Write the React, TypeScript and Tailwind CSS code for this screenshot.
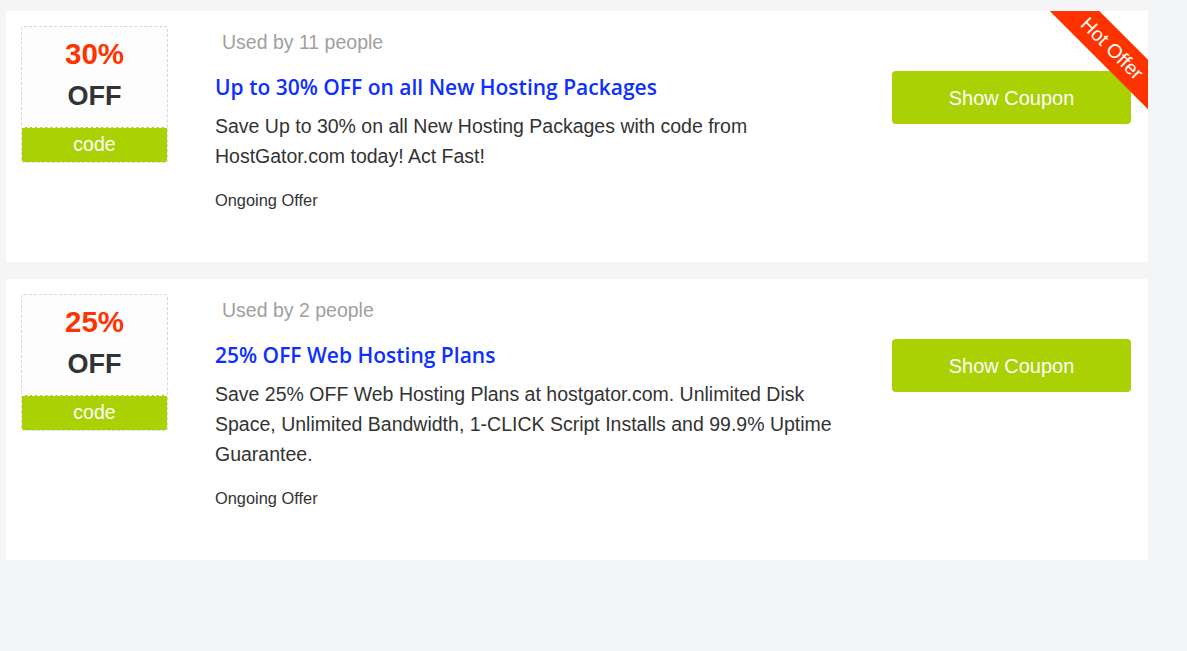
import React from 'react'

type Offer = {
  id: number
  percent: string
  used: string
  title: string
  description: string
  hot: boolean
}

const offers: Offer[] = [
  {
    id: 1,
    percent: '30%',
    used: 'Used by 11 people',
    title: 'Up to 30% OFF on all New Hosting Packages',
    description: 'Save Up to 30% on all New Hosting Packages with code from HostGator.com today! Act Fast!',
    hot: true,
  },
  {
    id: 2,
    percent: '25%',
    used: 'Used by 2 people',
    title: '25% OFF Web Hosting Plans',
    description:
      'Save 25% OFF Web Hosting Plans at hostgator.com. Unlimited Disk Space, Unlimited Bandwidth, 1-CLICK Script Installs and 99.9% Uptime Guarantee.',
    hot: false,
  },
]

const CouponCard: React.FC<{ offer: Offer }> = ({ offer }) => {
  return (
    <div className="relative overflow-hidden bg-white flex p-[15px]">
      {offer.hot && (
        <div className="absolute top-[20px] right-[-39px] w-[150px] h-[35px] rotate-45 bg-[#ff3300] text-white text-[19.5px] leading-[35px] text-center">
          Hot Offer
        </div>
      )}

      <div className="w-[147px] h-[137px] shrink-0 border border-dashed border-[#d8d8d8] rounded-[3px] bg-[#fdfdfe] flex flex-col overflow-hidden">
        <div className="flex-1 flex flex-col items-center">
          <span className="mt-[8px] text-[29.5px] leading-[38px] font-bold text-[#ff3300]">{offer.percent}</span>
          <span className="mt-[6px] text-[27px] leading-[34px] font-bold text-[#333333]">OFF</span>
        </div>
        <div className="h-[35px] bg-[#a9d104] border-t border-dashed border-white text-white text-[19.5px] leading-[33px] text-center">
          code
        </div>
      </div>

      <div className="ml-[47px] w-[630px] pb-[37px]">
        <div className="mt-[1px] pl-[7px] text-[19.5px] leading-[30px] text-[#a0a0a0]">{offer.used}</div>
        <div className="mt-[15px] text-[21px] leading-[30px] font-semibold text-[#0d2fff] font-['Open_Sans',sans-serif]">
          {offer.title}
        </div>
        <p className="mt-[9px] text-[19.5px] leading-[30px] text-[#333333]">{offer.description}</p>
        <div className="mt-[19px] text-[16.4px] leading-[20px] text-[#333333]">Ongoing Offer</div>
      </div>

      <div className="ml-auto mr-[2px] mt-[45px]">
        <button className="w-[239px] h-[53px] rounded-[4px] bg-[#a9d104] text-white text-[20px]">Show Coupon</button>
      </div>
    </div>
  )
}

const App: React.FC = () => {
  return (
    <div className="min-h-[651px] bg-[#f4f5f7] font-['Liberation_Sans',Arial,sans-serif]">
      <div className="w-[1142px] ml-[6px] pt-[11px] flex flex-col gap-[17px]">
        {offers.map((offer) => (
          <CouponCard key={offer.id} offer={offer} />
        ))}
      </div>
    </div>
  )
}

export default App
